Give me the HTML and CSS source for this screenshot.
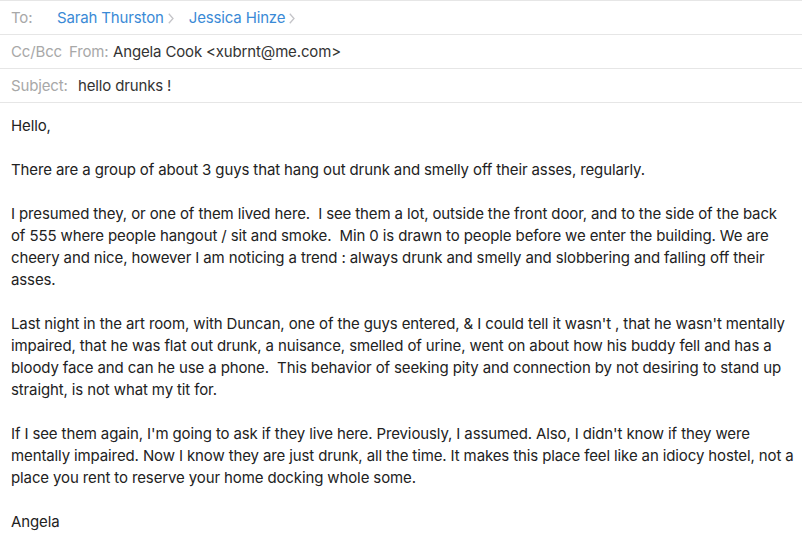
FILE: index.html
```html
<!DOCTYPE html>
<html lang="en">
<head>
  <meta charset="UTF-8">
  <title>hello drunks !</title>
  <link rel="stylesheet" href="styles.css">
</head>
<body>

  <div class="headers">
    <div class="row">
      <span class="label label-to">To:</span>
      <span class="recipient">Sarah Thurston<svg class="chev" width="6" height="11" viewBox="0 0 6 11"><path d="M0.8 0.8 L5 5.5 L0.8 10.2" fill="none" stroke="#c4c4c8" stroke-width="1.3"/></svg></span>
      <span class="recipient">Jessica Hinze<svg class="chev" width="6" height="11" viewBox="0 0 6 11"><path d="M0.8 0.8 L5 5.5 L0.8 10.2" fill="none" stroke="#c4c4c8" stroke-width="1.3"/></svg></span>
    </div>
    <div class="row">
      <span class="label label-cc">Cc/Bcc</span>
      <span class="label label-from">From:</span>
      <span class="value">Angela Cook &lt;xubrnt@me.com&gt;</span>
    </div>
    <div class="row">
      <span class="label label-subject">Subject:</span>
      <span class="value">hello drunks !</span>
    </div>
  </div>

  <div class="message">
    <p>Hello,</p>
    <p>There are a group of about 3 guys that hang out drunk and smelly off their asses, regularly.</p>
    <p>I presumed they, or one of them lived here.&nbsp; I see them a lot, outside the front door, and to the side of the back<br>
      of 555 where people hangout / sit and smoke.&nbsp; Min 0 is drawn to people before we enter the building. We are<br>
      cheery and nice, however I am noticing a trend : always drunk and smelly and slobbering and falling off their<br>
      asses.</p>
    <p>Last night in the art room, with Duncan, one of the guys entered, &amp; I could tell it wasn't , that he wasn't mentally<br>
      impaired, that he was flat out drunk, a nuisance, smelled of urine, went on about how his buddy fell and has a<br>
      bloody face and can he use a phone.&nbsp; This behavior of seeking pity and connection by not desiring to stand up<br>
      straight, is not what my tit for.</p>
    <p>If I see them again, I'm going to ask if they live here. Previously, I assumed. Also, I didn't know if they were<br>
      mentally impaired. Now I know they are just drunk, all the time. It makes this place feel like an idiocy hostel, not a<br>
      place you rent to reserve your home docking whole some.</p>
    <p>Angela</p>
  </div>

</body>
</html>
```

FILE: styles.css
```css
body {
  margin: 0;
  background: #fff;
  font-family: Inter, "Noto Sans", sans-serif;
  color: #222;
}

.headers {
  border-top: 1px solid #e6e6e6;
}

.row {
  display: flex;
  align-items: center;
  height: 33px;
  padding-left: 11px;
  border-bottom: 1px solid #e6e6e6;
  font-size: 15px;
  letter-spacing: -0.15px;
  white-space: nowrap;
}

.label {
  color: #a8a8a8;
}

.label-to {
  width: 46px;
}

.label-cc {
  width: 58px;
}

.label-from {
  width: 44px;
}

.label-subject {
  width: 67px;
}

.value {
  color: #333;
}

.recipient {
  display: flex;
  align-items: center;
  color: #3a8ad6;
  margin-right: 15px;
}

.chev {
  margin-left: 4px;
  margin-top: 1px;
}

.message {
  padding: 12px 11px 0;
  font-size: 15px;
  line-height: 22px;
  letter-spacing: -0.12px;
  white-space: nowrap;
}

.message p {
  margin: 0 0 22px;
}
```
